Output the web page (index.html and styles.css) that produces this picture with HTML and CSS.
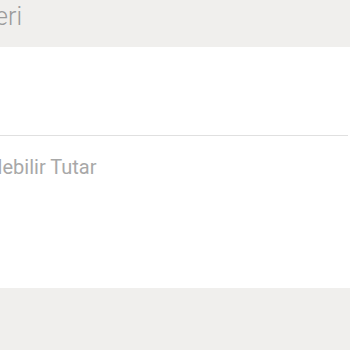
FILE: index.html
```html
<!DOCTYPE html>
<html lang="tr">
<head>
    <meta charset="UTF-8">
    <meta name="viewport" content="width=device-width, initial-scale=1.0">
    <title>Çekilebilir Tutar</title>
    <link rel="stylesheet" href="styles.css">
</head>
<body>
    <div class="topbar">
        <span class="back">Geri</span>
    </div>
    <div class="spacer"></div>
    <div class="divider"></div>
    <div class="field">
        <span class="label">Çekilebilir Tutar</span>
    </div>
    <div class="footer"></div>
</body>
</html>
```
FILE: styles.css
```css
body {
    margin: 0;
    padding: 0;
    font-family: Roboto, "Noto Sans", sans-serif;
    background: white;
    overflow: hidden;
}
.topbar {
    height: 47px;
    background: #f0efed;
    white-space: nowrap;
}
.back {
    display: inline-block;
    margin-left: -22px;
    font-size: 25px;
    font-weight: 300;
    line-height: 34px;
    color: #9a9a9a;
}
.spacer {
    height: 88px;
}
.divider {
    height: 1px;
    margin-right: 2px;
    background: #e0e0e0;
}
.field {
    height: 152px;
    white-space: nowrap;
}
.label {
    display: inline-block;
    margin-left: -41px;
    margin-top: 17px;
    font-size: 20px;
    line-height: 28px;
    color: #a8a8a8;
}
.footer {
    height: 62px;
    background: #f0efed;
}
```
